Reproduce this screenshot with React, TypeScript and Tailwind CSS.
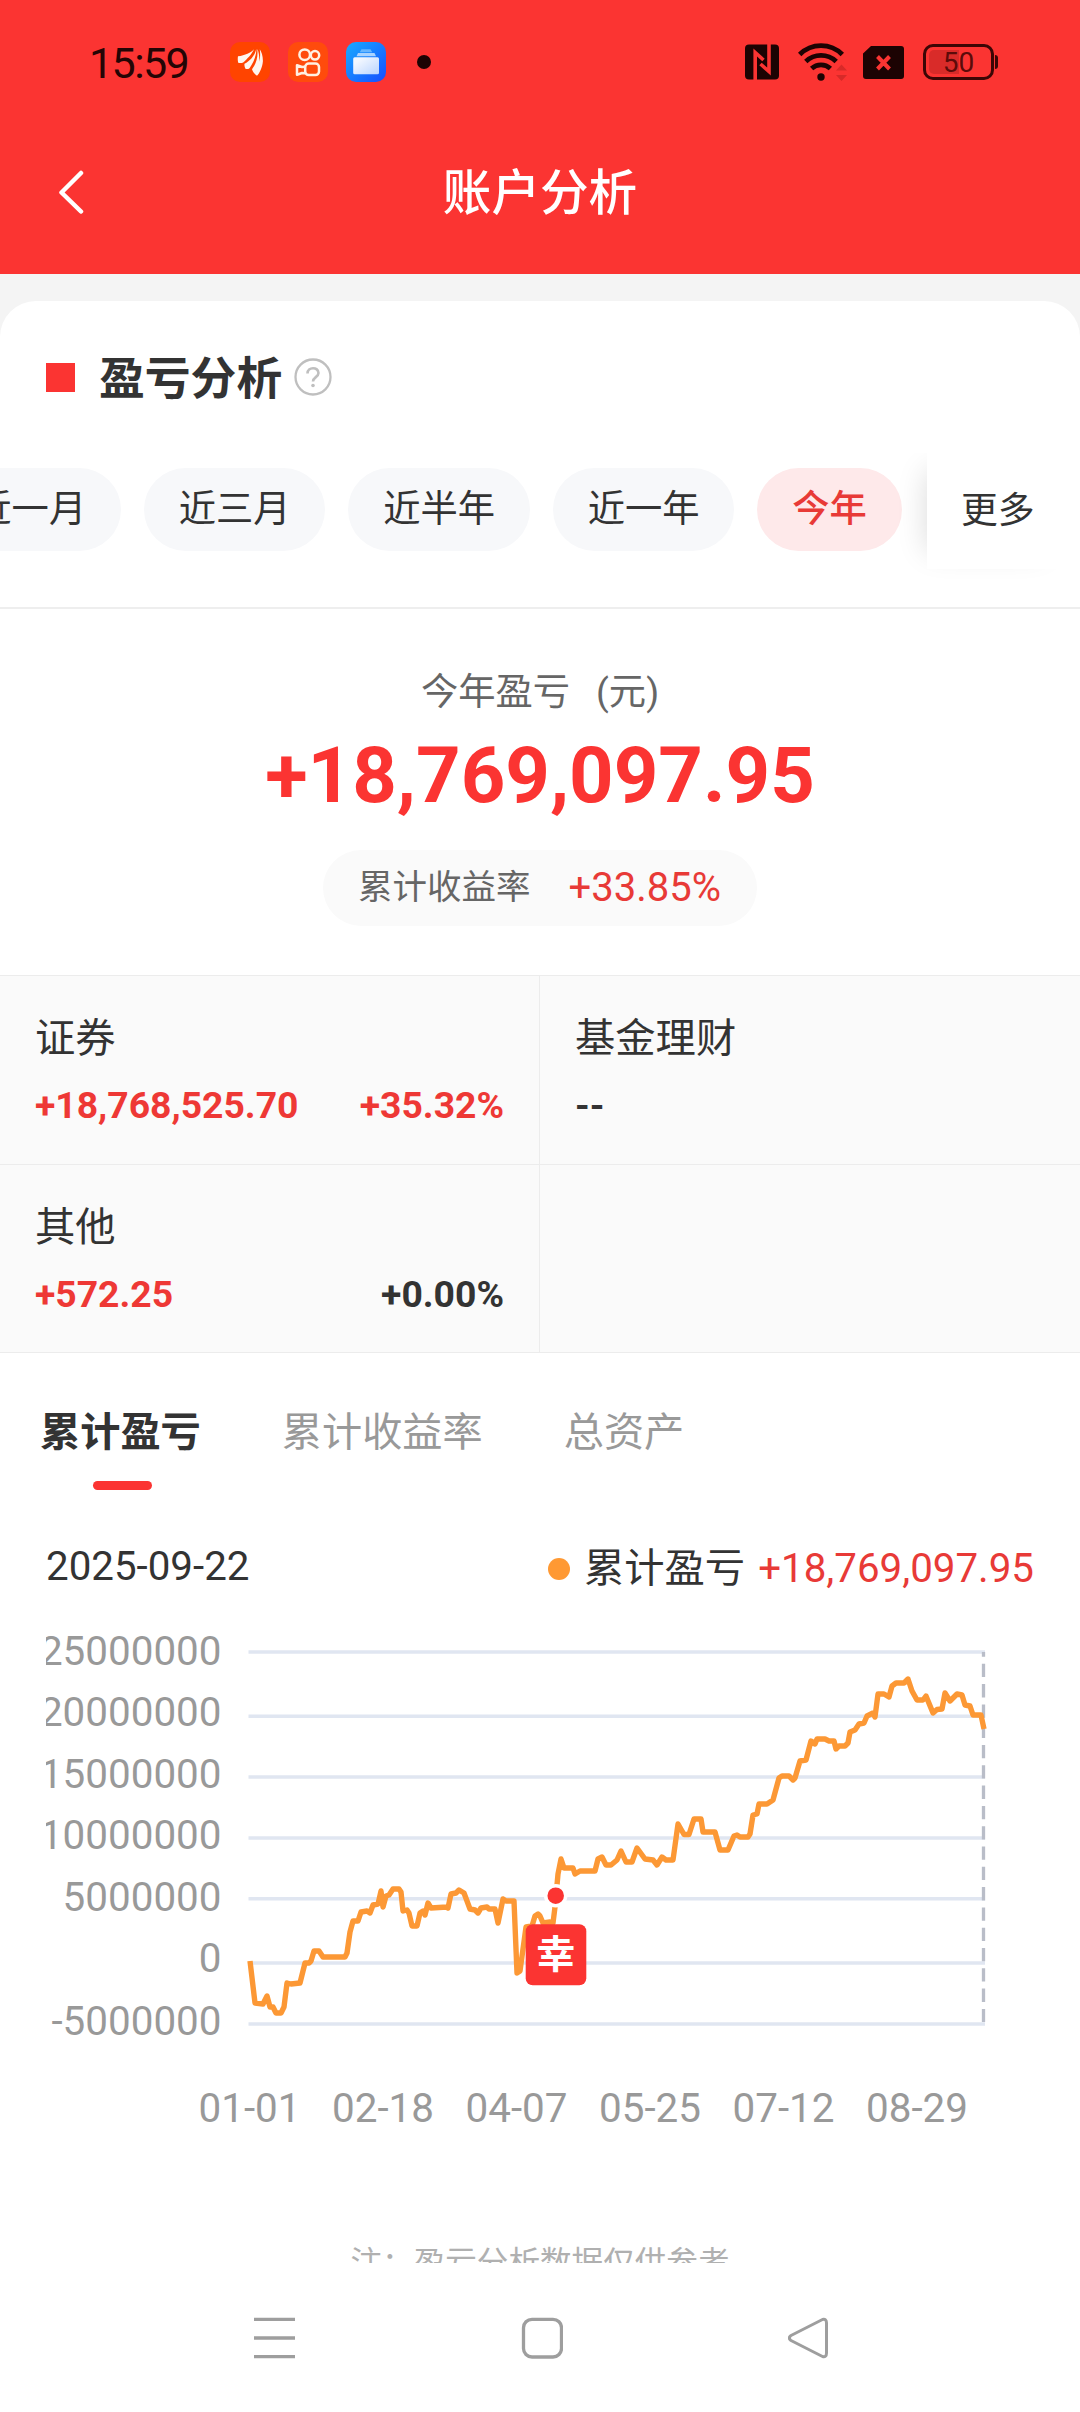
import clsx from "clsx";

type Tone = "up" | "flat";

type Holding = {
    name: string;
    amount?: string;
    amountTone?: Tone;
    rate?: string;
    rateTone?: Tone;
};

const periods = ["近一月", "近三月", "近半年", "近一年", "今年"];

const holdings: Holding[] = [
    {
        name: "证券",
        amount: "+18,768,525.70",
        amountTone: "up",
        rate: "+35.32%",
        rateTone: "up",
    },
    { name: "基金理财", amount: "--" },
    { name: "其他", amount: "+572.25", amountTone: "up", rate: "+0.00%" },
];

const yTicks = [
    { label: "25000000", line: 42, base: 54.6 },
    { label: "20000000", line: 106.3, base: 116 },
    { label: "15000000", line: 167, base: 177.7 },
    { label: "10000000", line: 228, base: 239 },
    { label: "5000000", line: 288.8, base: 301 },
    { label: "0", line: 353, base: 362.3 },
    { label: "-5000000", line: 414, base: 424.5 },
];

const xTicks = ["01-01", "02-18", "04-07", "05-25", "07-12", "08-29"];

const profitLine =
    "250,351 255,393 263,394 267,386 270,397 273,397 276,403 281,403 284,397 287,373 291,374 300,373 305,353 309,353 311,351 314,341 319,341 323,347 345,347 347,343 350,322 353,311 358,311 361,302 367,301 370,303 373,295 378,294 381,281 383,297 386,286 389,285 393,279 399,279 401,282 403,301 407,300 409,303 412,316 417,316 420,303 423,301 425,305 428,293 431,298 447,297 448,298 451,284 456,283 459,280 464,283 470,299 475,300 478,303 481,298 487,297 489,299 495,299 498,313 503,289 506,291 514,291 517,363 520,361 526,317 532,316 535,306 538,304 540,306 543,313 550,312 553,313 555,297 556,286 558,264 561,249 564,258 573,258 575,264 580,261 595,261 598,249 602,247 606,255 611,255 617,250 621,241 626,252 632,252 637,238 645,249 653,250 657,255 662,247 666,250 673,250 678,214 684,224.5 689,224.5 694,209 701,209 703,222 715,222 720,240 728,240 734,226 737,225 740,227 748,227 750,224 753,205 757,204 759,194 767,194 773,190 779,168 782,166 789,166 793,170 795,168 800,151 806,150 811,131 815,134 817,129 825,129 829,131 834,131 836,139 839,136 845,136 848,133 850,122 855,120 859,114 864,113 867,106 873,103 875,107 878,84 884,84 889,87 892,76 896,73 904,73 908,69 912,81 917,90 923,90 926,86 933,103 937,99.5 942,99 945,83 950,91 957,84 962,85 965,95 970,96 973,105 981,105 984,119";

function StatusBar() {
    return (
        <div className="flex h-[124px] items-center pl-[89px] pr-[86px] text-[#240505]">
            <span className="w-[141px] pt-[2px] text-[43px] leading-none tracking-[-1.6px]">
                15:59
            </span>
            <div className="flex flex-1 items-center gap-[18px]">
                <svg className="size-10" viewBox="0 0 40 40">
                    <rect width="40" height="40" rx="10" fill="#ff4400" />
                    <g fill="#fff6ee">
                        <path d="M24 7.2C21 10.5 15 13.5 8 14.3c-.4 2-.3 4.400.2 6.400 1.500.5 3.500.4 5-.2C17 17 22 12 24 7.200z" />
                        <path d="M26.300 7c-1.500 6.500-6 11.500-11.800 14.800-.3 1.600.2 3.600 1.200 5.200 1.500.3 2.800 0 3.800-.8C23 21.500 26.500 14 26.300 7z" />
                        <path d="M27.300 7c1 9-1.500 15-5.300 20.200.9 2.600 2.600 5 5 6.600 2.500-2.300 5.300-8 5.900-14.500C33 14 31.500 10 29.800 7.300c.6 5 .4 9-.5 12.500.2-5-.4-9.500-2-12.800z" />
                    </g>
                </svg>
                <svg className="size-10" viewBox="0 0 40 40">
                    <rect width="40" height="40" rx="10" fill="#ff4b0c" />
                    <g fill="none" stroke="#fff0e2" strokeWidth="2.500">
                        <circle cx="16.700" cy="12.700" r="5.300" />
                        <circle cx="27" cy="13.300" r="4.200" />
                        <rect x="17.200" y="21.500" width="13.800" height="11.600" rx="3.600" />
                        <path
                            d="M17.200 24.700l-3.200.3-5-1.800v9.600l5-1.800 3.200.3"
                            strokeLinejoin="round"
                        />
                    </g>
                </svg>
                <svg className="size-10" viewBox="0 0 40 40">
                    <defs>
                        <linearGradient id="files" x1="0" y1="0" x2="1" y2="1">
                            <stop offset="0" stopColor="#19abff" />
                            <stop offset="1" stopColor="#154dff" />
                        </linearGradient>
                        <linearGradient id="card" x1="0" y1="0" x2="1" y2="1">
                            <stop offset="0.200" stopColor="#f2f7ff" />
                            <stop offset="1" stopColor="#b9d4ff" />
                        </linearGradient>
                    </defs>
                    <rect width="40" height="40" rx="10" fill="url(#files)" />
                    <path d="M15.500 7.300h9l1.700 3H13.800z" fill="#67b6ff" />
                    <path d="M12 11h16.500l1.500 3.200H10.500z" fill="#a9d3ff" />
                    <rect x="7.200" y="15.300" width="25.800" height="17" rx="1.500" fill="url(#card)" />
                </svg>
                <span className="ml-[13px] size-[14px] rounded-full bg-[#1c0303]" />
            </div>
            <div className="flex items-center">
                <svg className="h-[36px] w-[34px]" viewBox="0 0 34 36">
                    <rect y="0.500" width="34" height="35" rx="4" fill="#1c0303" />
                    <path
                        d="M10.200 36V8.500L18.500 16M24 0v27.500L15.500 20"
                        fill="none"
                        stroke="#fb3432"
                        strokeWidth="3.600"
                    />
                </svg>
                <svg className="ml-[19px] h-10 w-[50px]" viewBox="0 0 50 40">
                    <g fill="none" stroke="#1c0303" strokeWidth="4.800">
                        <path d="M1.700 12.500A30 30 0 0 1 44.300 12.500" />
                        <path d="M7.800 19.500A22 22 0 0 1 38.200 19.500" />
                        <path d="M13.600 26.500A14 14 0 0 1 32.400 26.500" />
                    </g>
                    <circle cx="23" cy="35" r="3.700" fill="#1c0303" />
                    <path d="M38 28.500l5.500-6 5.500 6zM38 33l5.500 6 5.500-6z" fill="#d72a28" />
                </svg>
                <svg className="ml-[15px] h-[33px] w-[41px]" viewBox="0 0 41 33">
                    <path d="M8 0H38a3 3 0 0 1 3 3V30a3 3 0 0 1-3 3H3a3 3 0 0 1-3-3V7.500z" fill="#1c0303" />
                    <path d="M14.500 10.500l12 12.500M26.500 10.500l-12 12.500" stroke="#fb3432" strokeWidth="4" />
                </svg>
                <div className="relative ml-[19px] flex h-9 w-[71px] items-center rounded-[10px] border-[3px] border-[#3c0605] p-[3px]">
                    <span className="h-6 w-[30px] rounded-l-[5px] bg-[#d92b29]" />
                    <span className="absolute inset-0 flex items-center justify-center pt-px text-[28px] leading-none text-[#5c0b0a]">
                        50
                    </span>
                    <span className="absolute -right-[7px] top-[8px] h-[14px] w-[3px] rounded-r bg-[#3c0605]" />
                </div>
            </div>
        </div>
    );
}

function Header() {
    return (
        <header className="h-[274px] bg-[#fb3432]">
            <StatusBar />
            <div className="grid h-[136px] grid-cols-[1fr_auto_1fr] items-center pl-[57px]">
                <svg className="h-[44px] w-[28px]" viewBox="0 0 28 44">
                    <path
                        d="M24 3L4.500 22.500L24 41.500"
                        fill="none"
                        stroke="#fff"
                        strokeWidth="4.500"
                        strokeLinecap="round"
                        strokeLinejoin="round"
                    />
                </svg>
                <h1 className="-ml-[57px] pt-[5px] text-[48.600px] font-medium leading-none text-white">
                    账户分析
                </h1>
            </div>
        </header>
    );
}

function PeriodBar() {
    return (
        <div className="relative mt-[49px] h-[156px] overflow-hidden border-b-2 border-[#eeeeee]">
            <div className="-ml-[60.500px] flex gap-[23px] pt-[15px]">
                {periods.map((period) => (
                    <button
                        key={period}
                        className={clsx(
                            "h-[83px] shrink-0 rounded-full px-[34.8px] text-[37.300px] leading-none",
                            period === "今年"
                                ? "bg-[#fee9ea] font-medium text-[#e83a37]"
                                : "bg-[#f7f8fa] text-[#333333]",
                        )}
                    >
                        {period}
                    </button>
                ))}
            </div>
            <button className="absolute right-0 top-0 h-[116px] w-[153px] bg-white pl-[34px] text-left text-[36.800px] leading-none text-[#333333] shadow-[-18px_0_30px_-18px_rgba(0,0,0,0.15)]">
                更多
            </button>
        </div>
    );
}

function Summary() {
    return (
        <section className="flex h-[366px] flex-col items-center pt-[60px]">
            <p className="text-[37.300px] leading-[46px] text-[#666666]">
                今年盈亏<span className="ml-[26px]">(元)</span>
            </p>
            <p className="mt-[21px] text-[77.800px] font-bold leading-[80px] text-[#fb3432]">
                +18,769,097.95
            </p>
            <p className="mt-[34px] flex h-[76px] w-[434px] items-center justify-between rounded-full bg-[#fafafa] pl-[35px] pr-[36px] leading-none">
                <span className="pb-[2px] text-[34.500px] text-[#666666]">累计收益率</span>
                <span className="text-[40px] text-[#e83a37]">+33.85%</span>
            </p>
        </section>
    );
}

function HoldingCell({ holding }: { holding?: Holding }) {
    return (
        <div className="border-b border-r border-[#ececec] pl-[35px] pr-[35px] pt-[38px] even:border-r-0">
            {holding && (
                <>
                    <p className="text-[40.300px] leading-[50px] text-[#333333]">{holding.name}</p>
                    <p className="mt-[18px] flex justify-between text-[37.300px] font-bold leading-[46px] text-[#333333]">
                        <span className={clsx(holding.amountTone === "up" && "text-[#ee3835]")}>
                            {holding.amount}
                        </span>
                        <span className={clsx(holding.rateTone === "up" && "text-[#ee3835]")}>
                            {holding.rate}
                        </span>
                    </p>
                </>
            )}
        </div>
    );
}

function ProfitChart() {
    return (
        <svg className="block h-[560px] w-full" viewBox="0 0 1080 560">
            <defs>
                <clipPath id="axis">
                    <rect x="46" y="0" width="1034" height="560" />
                </clipPath>
            </defs>
            <g fontSize="40.400" fill="#999999" clipPath="url(#axis)">
                {yTicks.map((tick) => (
                    <text key={tick.label} x="221.500" y={tick.base} textAnchor="end">
                        {tick.label}
                    </text>
                ))}
                {xTicks.map((label, i) => (
                    <text key={label} x={249.500 + i * 133.500} y="511.500" textAnchor="middle">
                        {label}
                    </text>
                ))}
            </g>
            <g stroke="#e0e6f1" strokeWidth="3.500">
                {yTicks.map((tick) => (
                    <line key={tick.label} x1="248.500" x2="985" y1={tick.line} y2={tick.line} />
                ))}
            </g>
            <line
                x1="983.500"
                x2="983.500"
                y1="42"
                y2="412"
                stroke="#b9bdc8"
                strokeWidth="3.300"
                strokeDasharray="13.300 7"
                strokeDashoffset="8.500"
            />
            <polyline
                points={profitLine}
                fill="none"
                stroke="#fc9835"
                strokeWidth="5.400"
                strokeLinejoin="round"
            />
            <circle cx="555.700" cy="285.700" r="10" fill="#fb3432" stroke="#ffffff" strokeWidth="3.500" />
            <rect x="525.700" y="314.300" width="60.600" height="61" rx="7" fill="#fb3432" />
            <text x="555.800" y="357.500" fontSize="39" fontWeight="700" fill="#ffffff" textAnchor="middle">
                幸
            </text>
        </svg>
    );
}

function NavBar() {
    return (
        <nav className="flex h-[149px] items-center justify-between pl-[253px] pr-[250px]">
            <svg className="h-[44px] w-[42px]" viewBox="0 0 42 44" stroke="#9e9e9e" strokeWidth="3.300">
                <path d="M1 3.300h41M1 22h41M1 40.700h41" />
            </svg>
            <svg className="h-[44px] w-[42px]" viewBox="0 0 42 44" stroke="#9e9e9e" strokeWidth="3.300">
                <rect x="2.500" y="3.300" width="38" height="37.700" rx="8.500" fill="none" />
            </svg>
            <svg className="h-[44px] w-[42px]" viewBox="0 0 42 44" stroke="#9e9e9e" strokeWidth="3">
                <path
                    d="M34.500 3.500L3 19.500Q-.4 22 3 24.500L34.500 40.500Q38.500 41.500 38.500 37V7Q38.500 2.500 34.500 3.500z"
                    fill="none"
                    strokeLinejoin="round"
                />
            </svg>
        </nav>
    );
}

export default function App() {
    return (
        <div className="flex h-[2412px] w-[1080px] flex-col overflow-hidden bg-[#f4f4f4] font-['Roboto','Noto_Sans_CJK_SC',sans-serif]">
            <Header />
            <main className="mt-[27px] h-[1962px] shrink-0 overflow-hidden rounded-t-[36px] bg-white">
                <div className="flex items-center pl-[46px] pt-[49px]">
                    <span className="size-[29px] bg-[#fb3432]" />
                    <h2 className="ml-[24px] h-[54px] pt-[3px] text-[45.800px] font-bold leading-[54px] text-[#333333]">
                        盈亏分析
                    </h2>
                    <svg className="ml-[12px] size-[38px]" viewBox="0 0 38 38">
                        <circle cx="19" cy="19" r="17.500" fill="none" stroke="#bfbfbf" strokeWidth="2.300" />
                        <path
                            d="M13.500 15.500C13.500 8.500 24.500 8.500 24.500 15c0 4-5.500 4.300-5.500 8.500"
                            fill="none"
                            stroke="#bfbfbf"
                            strokeWidth="2.600"
                        />
                        <circle cx="19" cy="27.500" r="1.800" fill="#bfbfbf" />
                    </svg>
                </div>
                <PeriodBar />
                <Summary />
                <div className="grid h-[378px] grid-cols-2 grid-rows-2 overflow-hidden border-t border-[#ececec] bg-[#fafafa]">
                    {[0, 1, 2, 3].map((i) => (
                        <HoldingCell key={i} holding={holdings[i]} />
                    ))}
                </div>
                <div className="flex h-[157px] gap-[81px] pl-[40px] pt-[55px] text-[40.200px] leading-[50px] text-[#999999]">
                    <div className="flex flex-col items-center">
                        <span className="font-bold text-[#333333]">累计盈亏</span>
                        <span className="ml-[5px] mt-[23px] h-[9px] w-[59px] rounded-full bg-[#fb3432]" />
                    </div>
                    <span>累计收益率</span>
                    <span>总资产</span>
                </div>
                <div className="flex h-[100px] items-center pl-[46px] pr-[46px] pt-[18px] text-[40.300px] leading-none text-[#333333]">
                    <span className="flex-1 pb-[3px]">2025-09-22</span>
                    <span className="mr-[14px] size-[22px] rounded-full bg-[#ff9933]" />
                    <span className="mr-[13px]">累计盈亏</span>
                    <span className="text-[#e83a37]">+18,769,097.95</span>
                </div>
                <ProfitChart />
                <p className="mt-[72px] text-center text-[31.600px] leading-[44px] text-[#b0b0b0]">
                    注：盈亏分析数据仅供参考
                </p>
            </main>
            <div className="bg-white">
                <NavBar />
            </div>
        </div>
    );
}
